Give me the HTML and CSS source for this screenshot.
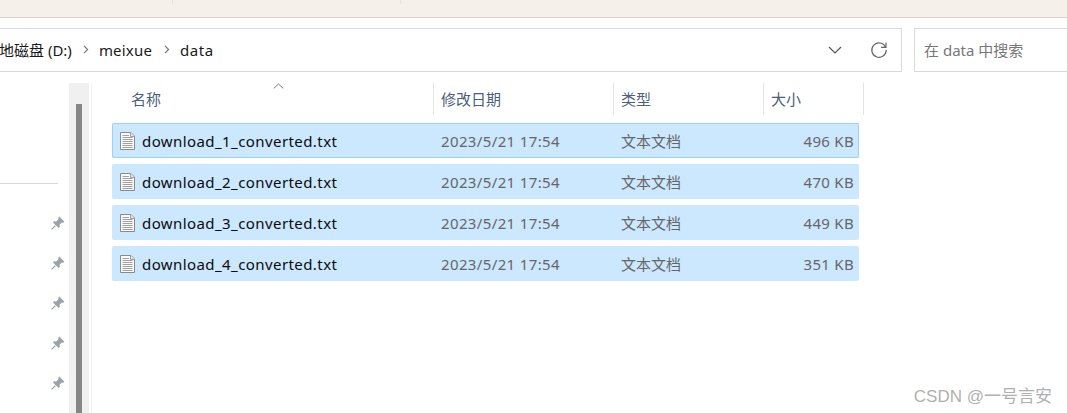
FILE: index.html
```html
<!DOCTYPE html>
<html lang="zh-CN">
<head>
<meta charset="utf-8">
<title>data</title>
<link rel="stylesheet" href="styles.css">
</head>
<body>
<svg class="defs" width="0" height="0" aria-hidden="true">
  <symbol id="doc" viewBox="0 0 15 18">
    <path d="M.5.5H11L14.5 4V17.5H.5Z" fill="#fafafa" stroke="#8a8a8a"/>
    <path d="M10.5.5V4.5H14.5" fill="#e4e4e4" stroke="#a0a0a0"/>
    <path d="M2.5 3.5H9M2.5 5.5H12.5M2.5 7.5H12.5M2.5 9.5H12.5M2.5 11.5H12.5M2.5 13.5H12.5M2.5 15.5H12.5" stroke="#a0a0a0" fill="none"/>
  </symbol>
  <symbol id="pin" viewBox="0 0 14 14">
    <path d="M8.2.6 13.4 5.8 12.2 6.8 11 6.4 8.6 8.8 8.8 11 7.6 12 2 6.4 3 5.2 5.2 5.4 7.6 3 7.2 1.8Z" fill="#9aa3a9"/>
    <path d="M4.4 9.6.6 13.4" stroke="#9aa3a9" stroke-width="1.3"/>
  </symbol>
</svg>
<div class="titlestrip">
  <div class="tab tab-a"></div>
  <div class="tab tab-b"></div>
</div>
<div class="navrow">
  <div class="address">
    <div class="crumbs">
      <span class="crumb-first">本地磁盘 (D:)</span>
      <svg class="chev" width="6" height="9" viewBox="0 0 6 9"><path d="M1 .8 4.6 4.5 1 8.2" fill="none" stroke="#777" stroke-width="1.2"/></svg>
      <span class="crumb-mid">meixue</span>
      <svg class="chev" width="6" height="9" viewBox="0 0 6 9"><path d="M1 .8 4.6 4.5 1 8.2" fill="none" stroke="#777" stroke-width="1.2"/></svg>
      <span class="crumb-last">data</span>
    </div>
    <svg class="down" width="14" height="8" viewBox="0 0 14 8"><path d="M1 1 7 7 13 1" fill="none" stroke="#555" stroke-width="1.2"/></svg>
    <svg class="refresh" width="18" height="18" viewBox="0 0 18 18"><path d="M15.6 6.2A7.2 7.2 0 1 0 16.2 9" fill="none" stroke="#666" stroke-width="1.2"/><path d="M16 1.4V6.4H11" fill="none" stroke="#666" stroke-width="1.2"/></svg>
  </div>
  <div class="search">在 data 中搜索</div>
</div>
<div class="main">
  <aside class="side">
    <div class="side-rule"></div>
    <ul class="pins">
      <li><svg class="pin"><use href="#pin"/></svg></li>
      <li><svg class="pin"><use href="#pin"/></svg></li>
      <li><svg class="pin"><use href="#pin"/></svg></li>
      <li><svg class="pin"><use href="#pin"/></svg></li>
      <li><svg class="pin"><use href="#pin"/></svg></li>
    </ul>
  </aside>
  <div class="track"><div class="thumb"></div></div>
  <section class="list">
    <div class="head">
      <div class="h h-name">名称<svg class="caret" width="11" height="6" viewBox="0 0 11 6"><path d="M.8 5.4 5.5 1 10.2 5.4" fill="none" stroke="#777"/></svg></div>
      <div class="h h-date">修改日期</div>
      <div class="h h-type">类型</div>
      <div class="h h-size">大小</div>
    </div>
    <div class="rows">
      <div class="row focus">
        <svg class="doc"><use href="#doc"/></svg>
        <span class="c-name">download_1_converted.txt</span>
        <span class="c-date">2023/5/21 17:54</span>
        <span class="c-type">文本文档</span>
        <span class="c-size">496 KB</span>
      </div>
      <div class="row">
        <svg class="doc"><use href="#doc"/></svg>
        <span class="c-name">download_2_converted.txt</span>
        <span class="c-date">2023/5/21 17:54</span>
        <span class="c-type">文本文档</span>
        <span class="c-size">470 KB</span>
      </div>
      <div class="row">
        <svg class="doc"><use href="#doc"/></svg>
        <span class="c-name">download_3_converted.txt</span>
        <span class="c-date">2023/5/21 17:54</span>
        <span class="c-type">文本文档</span>
        <span class="c-size">449 KB</span>
      </div>
      <div class="row">
        <svg class="doc"><use href="#doc"/></svg>
        <span class="c-name">download_4_converted.txt</span>
        <span class="c-date">2023/5/21 17:54</span>
        <span class="c-type">文本文档</span>
        <span class="c-size">351 KB</span>
      </div>
    </div>
  </section>
</div>
<div class="watermark">CSDN @一号言安</div>
</body>
</html>
```
FILE: styles.css
```css
* { box-sizing: border-box; }
html, body { margin: 0; padding: 0; }
body {
  width: 1067px;
  height: 413px;
  overflow: hidden;
  position: relative;
  background: #fff;
  font-family: "Noto Sans", "Noto Sans CJK SC", sans-serif;
  font-size: 15px;
  color: #1a1a1a;
}
.defs { position: absolute; }

.titlestrip {
  height: 18px;
  display: flex;
  background: #f5f0ea;
  border-bottom: 1px solid #d9cfc5;
}
.tab { height: 4px; border-right: 1px solid #e6e1db; }
.tab-a { width: 173px; }
.tab-b { width: 228px; }

.navrow {
  display: flex;
  height: 44px;
  margin-top: 10px;
  gap: 12px;
}
.address {
  width: 902px;
  flex: none;
  display: flex;
  align-items: center;
  border: 1px solid #d9d9d9;
  border-left: none;
  overflow: hidden;
}
.crumbs {
  flex: 1;
  display: flex;
  align-items: center;
  white-space: nowrap;
  margin-left: -16px;
  padding-bottom: 1px;
}
.crumb-first { margin-right: 11px; }
.crumb-mid { letter-spacing: .2px; margin-right: 12px; }
.crumb-last { letter-spacing: .5px; }
.chev { margin-right: 10px; flex: none; }
.down { margin-right: 28px; flex: none; }
.refresh { margin-right: 13px; flex: none; }
.search {
  width: 200px;
  flex: none;
  display: flex;
  align-items: center;
  padding-left: 9px;
  padding-bottom: 1px;
  border: 1px solid #d9d9d9;
  color: #777;
}

.main {
  display: flex;
  margin-top: 11px;
  height: 330px;
}
.side { width: 69px; flex: none; }
.side-rule {
  height: 1px;
  width: 58px;
  margin-top: 100px;
  background: #d9d9d9;
}
.pins {
  list-style: none;
  margin: 32px 0 0;
  padding: 0 0 0 51px;
}
.pins li { height: 40px; }
.pin { display: block; width: 14px; height: 14px; }
.track {
  width: 20px;
  flex: none;
  background: #f0f0f0;
  padding: 21px 0 0 7px;
}
.thumb { width: 6px; height: 309px; background: #868686; }

.list {
  flex: 1;
  margin-left: 2px;
  border-left: 1px solid #f2f2f2;
  padding-left: 20px;
}
.head { display: flex; height: 32px; }
.h {
  position: relative;
  height: 32px;
  line-height: 33px;
  padding-left: 7px;
  border-right: 1px solid #e3e3e3;
  color: #4c607a;
}
.h-name { width: 322px; padding-left: 19px; }
.h-date { width: 180px; }
.h-type { width: 150px; }
.h-size { width: 100px; }
.caret { position: absolute; left: 161px; top: 0; }

.rows { display: flex; flex-direction: column; gap: 6px; margin-top: 8px; width: 747px; }
.row {
  height: 35px;
  display: flex;
  align-items: center;
  background: #cce8ff;
  border-radius: 2px;
  color: #666;
}
.row.focus { box-shadow: inset 0 0 0 1px #99d1ff; }
.doc { width: 15px; height: 18px; margin-left: 8px; flex: none; }
.c-name { width: 299px; margin-left: 7px; color: #0b0b0b; letter-spacing: .42px; }
.c-date { width: 180px; letter-spacing: .37px; }
.c-type { width: 150px; }
.c-size { width: 83px; text-align: right; letter-spacing: .3px; }

.watermark {
  position: absolute;
  right: 15px;
  top: 382px;
  font-family: "Liberation Sans", "Noto Sans CJK SC", sans-serif;
  font-size: 17px;
  color: #b0b0b0;
  white-space: nowrap;
}
```
